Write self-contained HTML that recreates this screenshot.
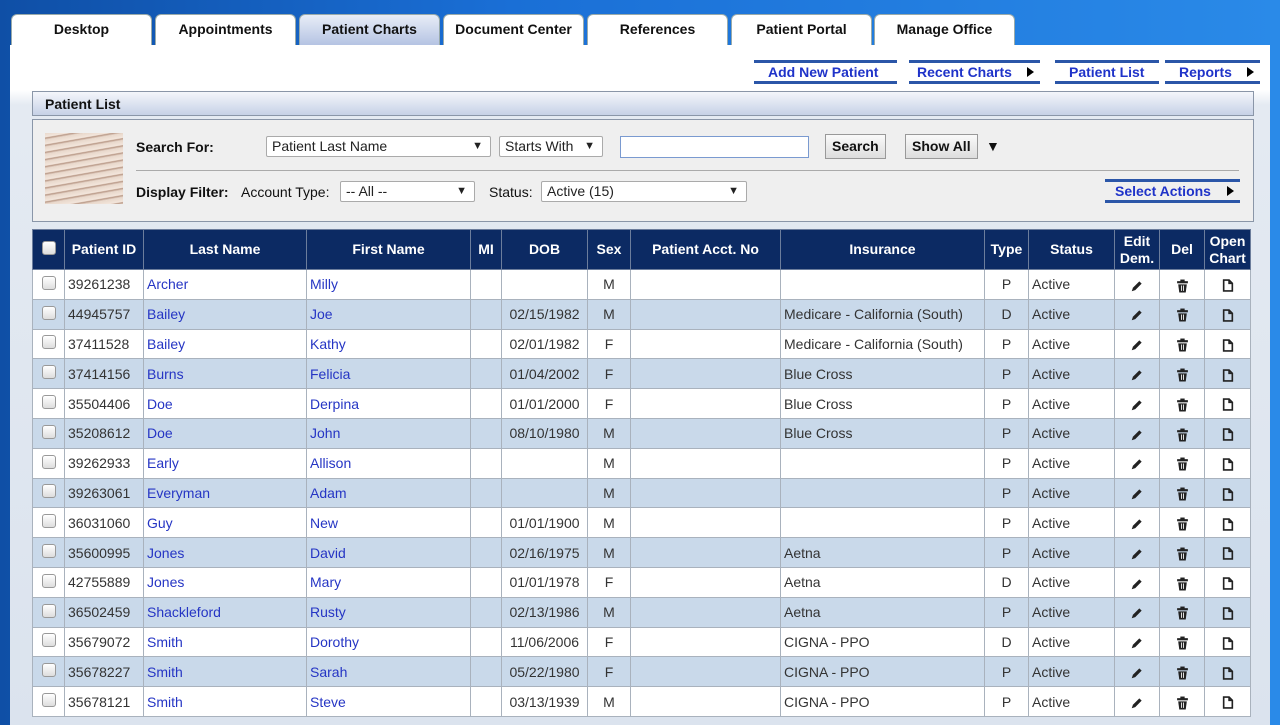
<!DOCTYPE html>
<html><head><meta charset="utf-8"><style>
*{box-sizing:border-box;margin:0;padding:0}
body{width:1280px;height:720px;overflow:hidden;font-family:"Liberation Sans",Arial,sans-serif;background:linear-gradient(90deg,#0f4fa6 0,#1a6fd6 40%,#2a8ae8 100%);position:relative}
.main{position:absolute;left:10px;top:45px;width:1260px;height:680px;background:linear-gradient(180deg,#fff 0,#fff 45px,#e4eaf2 60px,#dbe3ee 100%)}
.tab{position:absolute;top:14px;height:32px;width:141px;background:#fff;border-radius:6px 6px 0 0;font-weight:bold;font-size:14px;text-align:center;line-height:29px;color:#111;border:1px solid #9aa;border-bottom:none}
.tab.act{background:linear-gradient(#e8edf7,#b3c2e2)}
.lnk{position:absolute;top:60px;height:24px;border-top:3px solid #2b56a8;border-bottom:3px solid #2b56a8;color:#1f33c9;font-weight:bold;font-size:14px;line-height:18px;padding-left:14px}
.arr{position:absolute;right:6px;top:4px;width:0;height:0;border-left:7px solid #000;border-top:5px solid transparent;border-bottom:5px solid transparent}
.ph{position:absolute;left:32px;top:91px;width:1222px;height:25px;border:1px solid #8a96a8;background:linear-gradient(#f4f6fb,#c6d1e6);font-weight:bold;font-size:14px;padding:4px 12px;color:#111}
.sp{position:absolute;left:32px;top:119px;width:1222px;height:103px;border:1px solid #8a96a8;background:#efefef}
.sel{position:absolute;height:21px;border:1px solid #aaa;background:#fff;border-radius:2px;font-size:14px;line-height:19px;padding-left:5px;color:#222}
.sel:after{content:"▼";position:absolute;right:7px;top:0;font-size:11px}
.btn{position:absolute;height:25px;border:1px solid #999;background:linear-gradient(#fafafa,#ddd);font-weight:bold;font-size:14px;line-height:23px;padding:0 6px;color:#111}
.lbl{position:absolute;font-size:14px;color:#111}
table{position:absolute;left:32px;top:229px;border-collapse:collapse;font-size:14px}
th{background:#0c2a63;color:#fff;font-size:14px;height:40px;border:1px solid #6c7d9c;line-height:17px}
td{height:29.8px;border:1px solid #a9b2bd;color:#333;padding:0 3px;white-space:nowrap}
tr:nth-child(odd) td{background:#c9d9ea}
tr:nth-child(even) td{background:#fff}
td.b{color:#2535c4}
td.c{text-align:center}
td svg{vertical-align:middle}
.cb{display:inline-block;width:14px;height:14px;border:1px solid #999;border-radius:3px;background:linear-gradient(#fff,#ddd)}
</style></head><body>
<div class="tab" style="left:11px">Desktop</div>
<div class="tab" style="left:155px">Appointments</div>
<div class="tab act" style="left:299px">Patient Charts</div>
<div class="tab" style="left:443px">Document Center</div>
<div class="tab" style="left:587px">References</div>
<div class="tab" style="left:731px">Patient Portal</div>
<div class="tab" style="left:874px">Manage Office</div>
<div class="main"></div>
<div class="lnk" style="left:754px;width:143px">Add New Patient</div>
<div class="lnk" style="left:909px;width:131px;padding-left:8px">Recent Charts<span class="arr"></span></div>
<div class="lnk" style="left:1055px;width:104px">Patient List</div>
<div class="lnk" style="left:1165px;width:95px;padding-left:14px">Reports<span class="arr"></span></div>
<div class="ph">Patient List</div>
<div class="sp"></div>
<div style="position:absolute;left:45px;top:133px;width:78px;height:71px;background:repeating-linear-gradient(170deg,#e9d9cc 0,#f3e6dc 4px,#b89886 5px,#efe0d5 7px),linear-gradient(90deg,#a07a68,#eadbd8)"></div>
<div class="lbl" style="left:136px;top:139px;font-weight:bold">Search For:</div>
<div class="sel" style="left:266px;top:136px;width:225px">Patient Last Name</div>
<div class="sel" style="left:499px;top:136px;width:104px">Starts With</div>
<div style="position:absolute;left:620px;top:136px;width:189px;height:22px;border:1px solid #7a9ad0;background:#fff"></div>
<div class="btn" style="left:825px;top:134px">Search</div>
<div class="btn" style="left:905px;top:134px">Show All</div>
<div class="lbl" style="left:986px;top:138px;font-size:14px">▼</div>
<div style="position:absolute;left:136px;top:170px;width:1103px;height:1px;background:#aaa"></div>
<div class="lbl" style="left:136px;top:184px;font-weight:bold">Display Filter:</div>
<div class="lbl" style="left:241px;top:184px">Account Type:</div>
<div class="sel" style="left:340px;top:181px;width:135px">-- All --</div>
<div class="lbl" style="left:489px;top:184px">Status:</div>
<div class="sel" style="left:541px;top:181px;width:206px">Active (15)</div>
<div class="lnk" style="left:1105px;top:179px;width:135px;padding-left:10px">Select Actions<span class="arr"></span></div>
<table>
<tr><th style="width:32px"><span class="cb"></span></th><th style="width:79px">Patient ID</th><th style="width:163px">Last Name</th><th style="width:164px">First Name</th><th style="width:31px">MI</th><th style="width:86px">DOB</th><th style="width:43px">Sex</th><th style="width:150px">Patient Acct. No</th><th style="width:204px">Insurance</th><th style="width:44px">Type</th><th style="width:86px">Status</th><th style="width:45px">Edit<br>Dem.</th><th style="width:45px">Del</th><th style="width:46px">Open<br>Chart</th></tr>
</table>
<script>
const d=[["39261238","Archer","Milly","","M","","P"],["44945757","Bailey","Joe","02/15/1982","M","Medicare - California (South)","D"],["37411528","Bailey","Kathy","02/01/1982","F","Medicare - California (South)","P"],["37414156","Burns","Felicia","01/04/2002","F","Blue Cross","P"],["35504406","Doe","Derpina","01/01/2000","F","Blue Cross","P"],["35208612","Doe","John","08/10/1980","M","Blue Cross","P"],["39262933","Early","Allison","","M","","P"],["39263061","Everyman","Adam","","M","","P"],["36031060","Guy","New","01/01/1900","M","","P"],["35600995","Jones","David","02/16/1975","M","Aetna","P"],["42755889","Jones","Mary","01/01/1978","F","Aetna","D"],["36502459","Shackleford","Rusty","02/13/1986","M","Aetna","P"],["35679072","Smith","Dorothy","11/06/2006","F","CIGNA - PPO","D"],["35678227","Smith","Sarah","05/22/1980","F","CIGNA - PPO","P"],["35678121","Smith","Steve","03/13/1939","M","CIGNA - PPO","P"]];
const pen='<svg width="14" height="14" viewBox="0 0 12 12"><path d="M1.5 10.5 L2.5 7.5 L8 2 L10 4 L4.5 9.5 Z" fill="#222"/></svg>';
const bin='<svg width="13" height="14" viewBox="0 0 12 13"><rect x="1" y="2" width="10" height="2" fill="#222"/><rect x="4" y="0.5" width="4" height="2" fill="#222"/><path d="M2 5 H10 L9 12.5 H3 Z" fill="#222"/><path d="M5 6v5M7 6v5" stroke="#fff" stroke-width="0.8"/></svg>';
const doc='<svg width="12" height="13" viewBox="0 0 11 12"><path d="M1.5 1 H6.5 L9.5 4 V11 H1.5 Z M6.5 1 V4 H9.5" fill="none" stroke="#222" stroke-width="1.5"/></svg>';
let h='';for(const r of d){h+=`<tr><td class="c"><span class="cb"></span></td><td>${r[0]}</td><td class="b">${r[1]}</td><td class="b">${r[2]}</td><td></td><td class="c">${r[3]}</td><td class="c">${r[4]}</td><td></td><td>${r[5]}</td><td class="c">${r[6]}</td><td>Active</td><td class="c">${pen}</td><td class="c">${bin}</td><td class="c">${doc}</td></tr>`}
document.querySelector('table tbody').insertAdjacentHTML('beforeend',h);
</script>
</body></html>
